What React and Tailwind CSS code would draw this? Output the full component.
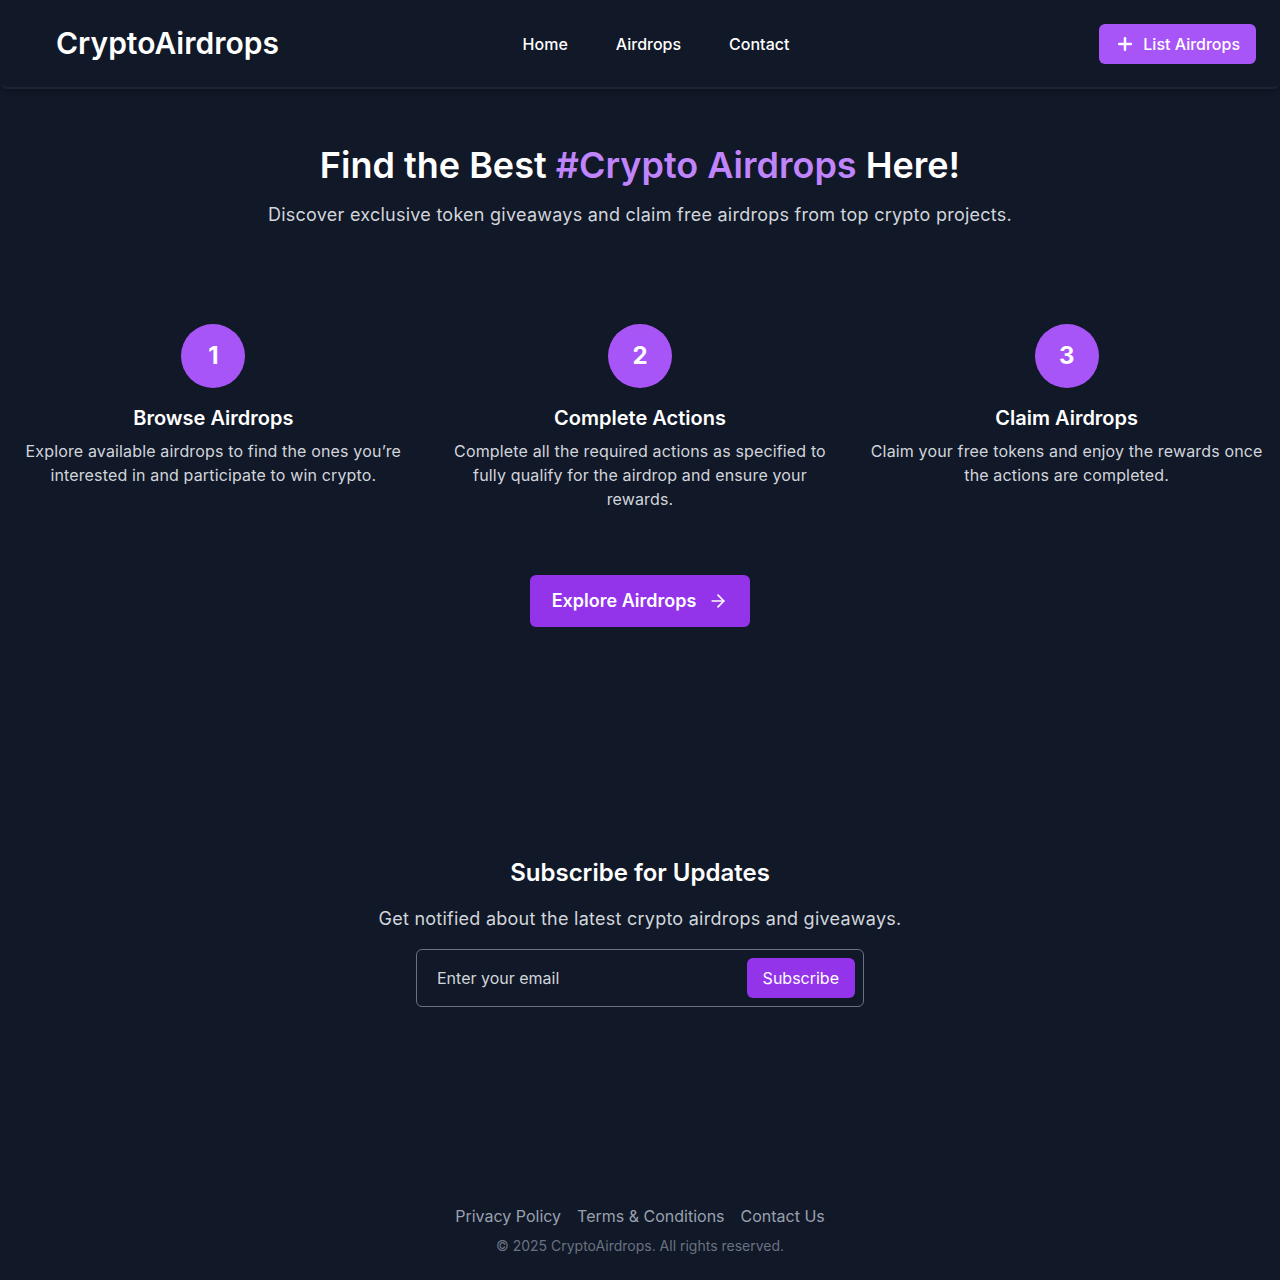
import React from "react";
import { Plus, ArrowRight } from "lucide-react";

const steps = [
  {
    n: "1",
    title: "Browse Airdrops",
    text: "Explore available airdrops to find the ones you’re interested in and participate to win crypto.",
  },
  {
    n: "2",
    title: "Complete Actions",
    text: "Complete all the required actions as specified to fully qualify for the airdrop and ensure your rewards.",
  },
  {
    n: "3",
    title: "Claim Airdrops",
    text: "Claim your free tokens and enjoy the rewards once the actions are completed.",
  },
];

export default function App() {
  return (
    <div className="min-h-[1280px] bg-[#111827] text-white font-['Inter',sans-serif] flex flex-col">
      {/* Header */}
      <header className="h-[89px] flex items-center pl-14 pr-6 bg-[#111827] border-b-2 border-[#1c2433] rounded-b-lg shadow-md">
        <div className="flex-1 text-[30px] font-semibold">CryptoAirdrops</div>
        <nav className="flex gap-12 text-base font-medium">
          <a>Home</a>
          <a>Airdrops</a>
          <a>Contact</a>
        </nav>
        <div className="flex-1 flex justify-end">
          <button className="h-10 pl-4 pr-4 rounded-md bg-[#a855f7] flex items-center gap-2 text-base font-medium">
            <Plus size={20} strokeWidth={3} />
            List Airdrops
          </button>
        </div>
      </header>

      {/* Hero */}
      <section className="text-center pt-[52px]">
        <h1 className="text-[36px] leading-[48px] font-semibold">
          Find the Best <span className="text-[#c084fc]">#Crypto Airdrops</span> Here!
        </h1>
        <p className="mt-3 text-lg text-gray-300 tracking-[0.25px]">
          Discover exclusive token giveaways and claim free airdrops from top crypto projects.
        </p>
      </section>

      {/* Steps */}
      <section className="grid grid-cols-3 mt-[95px]">
        {steps.map((s) => (
          <div key={s.n} className="flex flex-col items-center text-center px-4">
            <div className="w-16 h-16 rounded-full bg-[#a855f7] flex items-center justify-center text-2xl font-bold">
              {s.n}
            </div>
            <h3 className="mt-4 text-xl font-semibold">{s.title}</h3>
            <p className="mt-[7px] text-base leading-6 text-gray-300 tracking-[0.15px]">{s.text}</p>
          </div>
        ))}
      </section>

      <div className="flex justify-center mt-16">
        <button className="h-[52px] w-[220px] rounded-md bg-[#9333ea] flex items-center justify-center gap-3 text-lg font-semibold">
          Explore Airdrops
          <ArrowRight size={20} />
        </button>
      </div>

      {/* Subscribe */}
      <section className="text-center mt-[230px]">
        <h2 className="text-2xl font-semibold">Subscribe for Updates</h2>
        <p className="mt-4 text-lg text-gray-300 tracking-[0.25px]">
          Get notified about the latest crypto airdrops and giveaways.
        </p>
        <div className="mx-auto mt-4 w-[448px] h-[58px] border border-gray-500 rounded-md flex items-center pl-5 pr-2">
          <span className="flex-1 text-left text-base text-gray-300">Enter your email</span>
          <button className="h-10 px-4 rounded-md bg-[#9333ea] text-base">Subscribe</button>
        </div>
      </section>

      {/* Footer */}
      <footer className="mt-auto pb-6 text-center">
        <div className="flex justify-center gap-4 text-base text-gray-400">
          <a>Privacy Policy</a>
          <a>Terms &amp; Conditions</a>
          <a>Contact Us</a>
        </div>
        <p className="mt-2 text-sm text-gray-500">© 2025 CryptoAirdrops. All rights reserved.</p>
      </footer>
    </div>
  );
}
